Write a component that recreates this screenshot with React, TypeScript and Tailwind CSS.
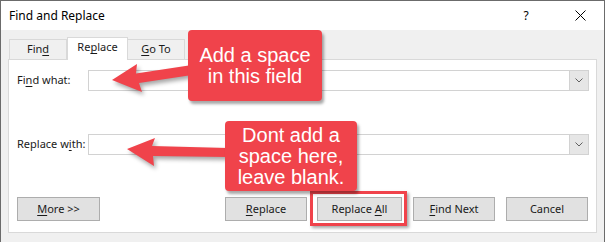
import React from "react";

function U({ children }: { children: React.ReactNode }) {
    return <span className="underline underline-offset-2">{children}</span>;
}

function Btn({ children, className = "" }: { children: React.ReactNode; className?: string }) {
    return (
        <div className={`h-[24px] flex items-center justify-center bg-[#e1e1e1] border border-[#adadad] text-[11px] text-[#1a1a1a] ${className}`}>
            <span className="whitespace-pre">{children}</span>
        </div>
    );
}

function Combo() {
    return (
        <div className="flex-1 h-[21px] flex border border-[#d2d2d2] bg-white">
            <div className="flex-1" />
            <div className="w-[19px] h-full bg-[#e6e6e6] border-l border-[#d2d2d2] flex items-center justify-center">
                <svg width="8" height="5" viewBox="0 0 8 5">
                    <path d="M0.5 0.5 L4 4 L7.5 0.5" fill="none" stroke="#606060" strokeWidth="1" />
                </svg>
            </div>
        </div>
    );
}

export default function App() {
    return (
        <div className="relative w-[605px] h-[242px] overflow-hidden font-['Noto_Sans',sans-serif]">
            <div className="w-[605px] h-[242px] flex flex-col border border-b-0 border-[#6b6b6b]">
                {/* Title bar */}
                <div className="h-[29px] bg-white flex items-center pl-[8px] text-[12px] text-black">
                    <span>Find and Replace</span>
                    <span className="ml-auto text-[12px] w-[10px] text-center">?</span>
                    <div className="w-[46px] flex justify-center ml-[26px] mr-[1px]">
                        <svg width="11" height="11" viewBox="0 0 11 11">
                            <path d="M0.5 0.5 L10.5 10.5 M10.5 0.5 L0.5 10.5" stroke="#000" strokeWidth="1" />
                        </svg>
                    </div>
                </div>

                {/* Body */}
                <div className="flex-1 bg-[#f0f0f0] pt-[7px] pl-[7px] pr-[7px]">
                    {/* Tabs */}
                    <div className="h-[22px] flex items-end pl-[1px] text-[11px] text-[#1a1a1a]">
                        <div className="w-[58px] h-[20px] border border-b-0 border-[#d9d9d9] bg-[#f0f0f0] flex items-center justify-center">
                            <span>Fin<U>d</U></span>
                        </div>
                        <div className="w-[61px] h-[23px] -mb-px relative z-10 border border-b-0 border-[#d9d9d9] bg-white flex items-center justify-center pb-[3px]">
                            <span>Re<U>p</U>lace</span>
                        </div>
                        <div className="w-[57px] h-[20px] border border-b-0 border-l-0 border-[#d9d9d9] bg-[#f0f0f0] flex items-center justify-center">
                            <span><U>G</U>o To</span>
                        </div>
                    </div>

                    {/* Panel */}
                    <div className="h-[174px] bg-white border border-[#d9d9d9] pt-[10px] pl-[8px] pr-[7px] text-[11px] text-[#1a1a1a]">
                        <div className="flex items-center h-[21px]">
                            <div className="w-[71px] whitespace-nowrap">
                                Fi<U>n</U>d what:
                            </div>
                            <Combo />
                        </div>
                        <div className="flex items-center h-[21px] mt-[43px]">
                            <div className="w-[71px] whitespace-nowrap">
                                Replace w<U>i</U>th:
                            </div>
                            <Combo />
                        </div>
                        <div className="flex items-center mt-[42px] pr-[1px]">
                            <Btn className="w-[83px]">
                                <U>M</U>ore &gt;&gt;
                            </Btn>
                            <Btn className="w-[82px] ml-auto">
                                <U>R</U>eplace
                            </Btn>
                            <div className="relative ml-[10px]">
                                <Btn className="w-[85px]">
                                    Replace <U>A</U>ll
                                </Btn>
                                <div className="absolute -left-[7px] -right-[5px] -top-[6px] -bottom-[5px] border-[3px] border-[#f0434b] shadow-[2px_2px_3px_rgba(0,0,0,0.35)]" />
                            </div>
                            <Btn className="w-[82px] ml-[11px] border-[#0078d7]">
                                <U>F</U>ind Next
                            </Btn>
                            <Btn className="w-[82px] ml-[11px]">Cancel</Btn>
                        </div>
                    </div>
                </div>
            </div>

            {/* Arrows */}
            <svg
                className="absolute inset-0 pointer-events-none drop-shadow-[2px_3px_2px_rgba(0,0,0,0.35)]"
                width="605"
                height="242"
                viewBox="0 0 605 242"
            >
                <polygon points="112,80 137,64 136,73.5 192,65 192,75 139,83 142,92" fill="#f0434b" />
                <polygon points="127,149 155,138 152,146 228,148 228,157 153,156 154,166" fill="#f0434b" />
            </svg>

            {/* Callouts */}
            <div className="absolute left-[188px] top-[30px] w-[134px] h-[71px] rounded-[4px] bg-[#f0434b] shadow-[2px_3px_3px_rgba(0,0,0,0.35)] flex flex-col items-center justify-center text-white text-[20px] leading-[21px] font-['Liberation_Sans',Arial,sans-serif]">
                <div>Add a space</div>
                <div>in this field</div>
            </div>
            <div className="absolute left-[225px] top-[121px] w-[132px] h-[70px] rounded-[4px] bg-[#f0434b] shadow-[2px_3px_3px_rgba(0,0,0,0.35)] flex flex-col items-center justify-center text-white text-[20px] leading-[21px] font-['Liberation_Sans',Arial,sans-serif]">
                <div>Dont add a</div>
                <div>space here,</div>
                <div>leave blank.</div>
            </div>
        </div>
    );
}
